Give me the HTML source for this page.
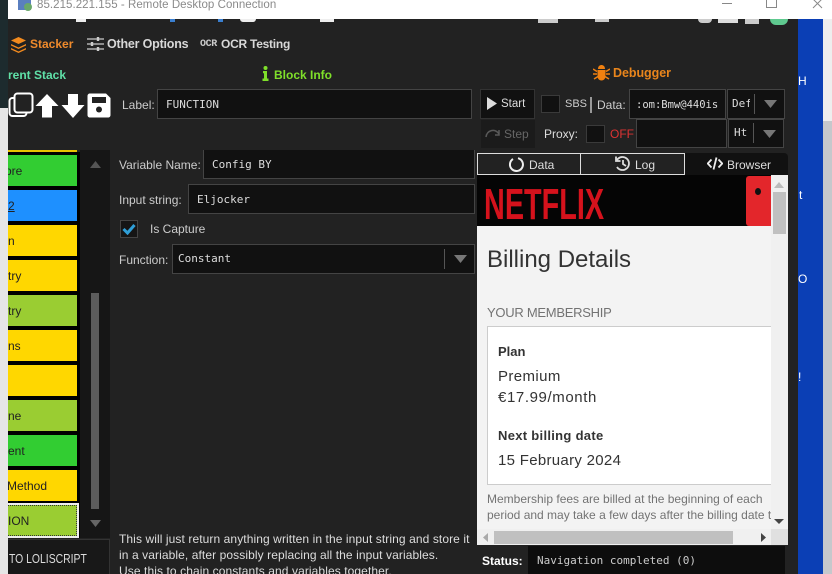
<!DOCTYPE html>
<html>
<head>
<meta charset="utf-8">
<style>
html,body{margin:0;padding:0;background:#222}
#r{position:relative;width:832px;height:574px;overflow:hidden;background:#222;font-family:"Liberation Sans",sans-serif;font-size:12px;color:#ddd}
#r div,#r svg{position:absolute}
.t{white-space:nowrap;line-height:16px}
.l{white-space:nowrap;line-height:16px;font-size:12px;color:#ccc}
.m{font-family:"DejaVu Sans Mono","Liberation Mono",monospace;font-size:11px;color:#ddd;white-space:nowrap;line-height:16px}
.box{background:#111;border:1px solid #444;box-sizing:border-box}
.blk{left:8px;width:69px;height:31px;color:#222;font-size:12px;line-height:33px;white-space:nowrap;overflow:hidden}
.b{font-weight:bold}
.w{background:#eee;top:19px;height:3px}
</style>
</head>
<body>
<div id="r">
<!-- desktop strips -->
<div style="left:0;top:0;width:8px;height:108px;background:#1d2b2e"></div>
<div style="left:0;top:108px;width:8px;height:466px;background:#e6e6e6"></div>
<div style="left:798px;top:0;width:25px;height:574px;background:#0b3fb5"></div>
<div style="left:823px;top:19px;width:9px;height:555px;background:#c6c8cc"></div>
<div style="left:823px;top:19px;width:9px;height:102px;background:#eee"></div>
<div class="t" style="left:798px;top:73px;color:#fff;font-size:12px">H</div>
<div class="t" style="left:799px;top:187px;color:#fff;font-size:12px">t</div>
<div class="t" style="left:798px;top:271px;color:#fff;font-size:12px">O</div>
<div class="t" style="left:798px;top:369px;color:#fff;font-size:12px">!</div>

<!-- title bar -->
<div style="left:8px;top:0;width:824px;height:19px;background:#fff"></div>
<div style="left:18px;top:0;width:13px;height:10px;background:#5a7fc0"></div>
<div style="left:24px;top:3px;width:8px;height:8px;border-radius:50%;background:#6aa86a"></div>
<div class="t" style="left:37px;top:-3px;color:#8a8a8a;font-size:11.5px;letter-spacing:.05px">85.215.221.155 - Remote Desktop Connection</div>
<div style="left:722px;top:3px;width:10px;height:1px;background:#888"></div>
<div style="left:766px;top:-3px;width:9px;height:9px;border:1px solid #888"></div>
<svg style="left:812px;top:-2px" width="11" height="11"><path d="M1 1L10 10M10 1L1 10" stroke="#888" fill="none"/></svg>
<!-- clipped taskbar fragments -->
<div class="w" style="left:76px;width:10px"></div>
<div class="w" style="left:170px;width:5px;background:#3a7fd0"></div>
<div class="w" style="left:218px;width:5px;background:#3a7fd0"></div>
<div class="w" style="left:240px;width:16px;border-radius:0 0 8px 8px"></div>
<div class="w" style="left:320px;width:14px"></div>
<div class="w" style="left:538px;width:20px;height:4px;background:#ccc"></div>
<div class="w" style="left:595px;width:14px;height:3px;background:#ccc"></div>
<div class="w" style="left:698px;width:14px;height:4px;background:#ccc;border-radius:0 0 7px 7px"></div>
<div class="w" style="left:718px;width:20px;height:4px;background:#ddd"></div>
<div class="w" style="left:745px;width:14px;height:5px;background:#ccc"></div>
<div style="left:770px;top:19px;width:18px;height:6px;border-radius:0 0 9px 9px;background:#5fc98f"></div>

<!-- tabs -->
<svg style="left:10px;top:37px" width="17" height="16" viewBox="0 0 17 16"><path d="M8.5 0L16 3.5L8.5 7L1 3.5Z" fill="#f28a1e"/><path d="M1 7L8.5 10.5L16 7V8.5L8.5 12L1 8.5Z" fill="#f28a1e"/><path d="M1 11L8.5 14.5L16 11V12.5L8.5 16L1 12.5Z" fill="#f28a1e"/></svg>
<div class="t b" style="left:30px;top:36px;color:#ef8a2c;font-size:12px">Stacker</div>
<svg style="left:87px;top:36px" width="17" height="16" viewBox="0 0 17 16"><path d="M0 3H17M0 8H17M0 13H17" stroke="#ccc" stroke-width="1.3"/><path d="M11 1V5M5 6V10M11 11V15" stroke="#ccc" stroke-width="2.4"/></svg>
<div class="t b" style="left:107px;top:36px;color:#d8d8d8;font-size:12.5px;letter-spacing:-.2px">Other Options</div>
<div class="t b" style="left:200px;top:37px;color:#ccc;font-size:10px;font-family:'Liberation Mono',monospace;letter-spacing:-.4px">OCR</div>
<div class="t b" style="left:221px;top:36px;color:#d8d8d8;font-size:12px;letter-spacing:-.25px">OCR Testing</div>

<!-- headers -->
<div class="t b" style="left:8px;top:67px;color:#5fe0a8;font-size:12px">rent Stack</div>
<svg style="left:262px;top:66px" width="7" height="15" viewBox="0 0 7 15"><circle cx="3.5" cy="2" r="2" fill="#7fe02a"/><path d="M1 5H5V12.5H6.5V15H.5V12.5H2V7.2H1Z" fill="#7fe02a"/></svg>
<div class="t b" style="left:274px;top:67px;color:#7fe02a;font-size:12px">Block Info</div>
<svg style="left:593px;top:64px" width="17" height="17" viewBox="0 0 17 17"><path d="M5 5C5 2 7 1 8.500 1S12 2 12 5ZM4.500 6H12.500V12C12.500 15 10.500 16.500 8.500 16.500S4.500 15 4.500 12Z" fill="#f08010"/><path d="M0 5L4 7.500M17 5L13 7.500M0 10H4M17 10H13M1 15L5 12.500M16 15L12 12.500" stroke="#f08010" stroke-width="1.500"/></svg>
<div class="t b" style="left:613px;top:65px;color:#e9851c;font-size:12.5px;letter-spacing:-.05px">Debugger</div>

<!-- toolbar icons -->
<svg style="left:8px;top:92px" width="26" height="26" viewBox="0 0 26 26"><rect x="1.500" y="6" width="17" height="18" rx="3" fill="none" stroke="#fff" stroke-width="2"/><rect x="6.500" y="1.500" width="18" height="19" rx="3" fill="#222" stroke="#fff" stroke-width="2"/></svg>
<svg style="left:35px;top:93px" width="24" height="25" viewBox="0 0 24 25"><path d="M12 1L23.500 13H17V24.500H7V13H.5Z" fill="#fff"/></svg>
<svg style="left:61px;top:94px" width="24" height="24" viewBox="0 0 24 24"><path d="M7 0H17V11H23.500L12 24L.5 11H7Z" fill="#fff"/></svg>
<svg style="left:87px;top:93px" width="24" height="25" viewBox="0 0 24 25"><path d="M3 .5H19L23.500 5V22C23.500 23.500 22.500 24.500 21 24.500H3C1.500 24.500 .5 23.500 .5 22V3C.5 1.500 1.500 .5 3 .5Z" fill="#fff"/><rect x="5" y="4" width="14" height="6" fill="#222"/><circle cx="12" cy="16.500" r="3" fill="#222"/></svg>

<div class="l" style="left:122px;top:97px">Label:</div>
<div class="box" style="left:157px;top:89px;width:315px;height:30px"></div>
<div class="m" style="left:166px;top:97px">FUNCTION</div>

<!-- debugger controls -->
<div class="box" style="left:480px;top:89px;width:55px;height:30px;border-color:#333"></div>
<svg style="left:487px;top:97px" width="11" height="13"><path d="M0 0L10 6.500L0 13Z" fill="#ddd"/></svg>
<div class="l" style="left:501px;top:96px;color:#ddd;font-size:11.5px">Start</div>
<div style="left:481px;top:120px;width:54px;height:28px;background:#1b1b1b"></div>
<svg style="left:485px;top:128px" width="16" height="10"><path d="M1 9C2 2 10 0 14 6M14 2V7H10" fill="none" stroke="#5a5a5a" stroke-width="1.500"/></svg>
<div class="l" style="left:504px;top:126px;color:#666">Step</div>
<div class="box" style="left:541px;top:95px;width:19px;height:18px;border-color:#3a3a3a"></div>
<div class="l" style="left:565px;top:96px;font-size:11px">SBS</div>
<div style="left:590px;top:97px;width:2px;height:16px;background:#999"></div>
<div class="l" style="left:597px;top:97px">Data:</div>
<div class="box" style="left:629px;top:89px;width:97px;height:30px;overflow:hidden"></div>
<div class="m" style="left:636px;top:97px;font-size:10.5px">:om:Bmw@440is</div>
<div class="box" style="left:727px;top:89px;width:58px;height:30px"></div>
<div class="m" style="left:732px;top:96px;width:18px;overflow:hidden">Def</div>
<div style="left:754px;top:94px;width:1px;height:20px;background:#555"></div>
<svg style="left:764px;top:100px" width="13" height="8"><path d="M0 0H13L6.500 8Z" fill="#777"/></svg>

<div class="l" style="left:544px;top:126px;color:#ddd">Proxy:</div>
<div class="box" style="left:586px;top:125px;width:19px;height:18px;border-color:#3a3a3a"></div>
<div class="l" style="left:610px;top:126px;color:#d33">OFF</div>
<div class="box" style="left:636px;top:119px;width:91px;height:29px"></div>
<div class="box" style="left:728px;top:119px;width:56px;height:29px"></div>
<div class="m" style="left:734px;top:125px">Ht</div>
<div style="left:753px;top:123px;width:1px;height:20px;background:#555"></div>
<svg style="left:763px;top:130px" width="13" height="8"><path d="M0 0H13L6.500 8Z" fill="#777"/></svg>

<!-- block list -->
<div style="left:8px;top:150px;width:69px;height:2px;background:#e8c200"></div>
<div style="left:8px;top:152px;width:72px;height:386px;background:#000"></div>
<div class="blk" style="top:155px;background:#32cd32"><span style="margin-left:-3px">ore</span></div>
<div class="blk" style="top:190px;background:#1e90ff"><span style="text-decoration:underline">2</span></div>
<div class="blk" style="top:225px;background:#ffd700">n</div>
<div class="blk" style="top:260px;background:#ffd700">try</div>
<div class="blk" style="top:295px;background:#9acd32">try</div>
<div class="blk" style="top:330px;background:#ffd700">ns</div>
<div class="blk" style="top:365px;background:#ffd700"></div>
<div class="blk" style="top:400px;background:#9acd32">ne</div>
<div class="blk" style="top:435px;background:#32cd32">ent</div>
<div class="blk" style="top:470px;background:#ffd700"><span style="margin-left:-1px">Method</span></div>
<div style="left:8px;top:503px;width:71px;height:35px;box-sizing:border-box;border:2px solid #eee;border-left:0;background:#9acd32"></div>
<div style="left:8px;top:505px;width:69px;height:31px;box-sizing:border-box;border:1px dotted #333;border-left:0"></div>
<div class="blk" style="top:505px;background:none">ION</div>

<!-- scrollbar -->
<div style="left:80px;top:150px;width:30px;height:388px;background:#161616"></div>
<svg style="left:90px;top:161px" width="11" height="7"><path d="M0 7H11L5.500 0Z" fill="#555"/></svg>
<div style="left:91px;top:293px;width:8px;height:216px;background:#5c5c5c"></div>
<svg style="left:90px;top:520px" width="11" height="7"><path d="M0 0H11L5.500 7Z" fill="#666"/></svg>
<div style="left:8px;top:539px;width:102px;height:35px;background:#181818;border-top:1px solid #333;border-right:1px solid #333;box-sizing:border-box"></div>
<div class="t" style="left:9px;top:551px;font-size:13px;color:#ddd;transform-origin:0 0;transform:scaleX(.8)">TO LOLISCRIPT</div>

<!-- block form -->
<div class="l" style="left:119px;top:157px">Variable Name:</div>
<div class="box" style="left:203px;top:150px;width:272px;height:29px;border-top:0"></div>
<div class="m" style="left:212px;top:157px">Config BY</div>
<div class="l" style="left:119px;top:192px">Input string:</div>
<div class="box" style="left:188px;top:184px;width:287px;height:30px"></div>
<div class="m" style="left:197px;top:192px">Eljocker</div>
<div style="left:120px;top:220px;width:18px;height:18px;background:#151515;border:1px solid #444;box-sizing:border-box"></div>
<svg style="left:122px;top:223px" width="14" height="12"><path d="M1.500 6L5.500 10L12.500 2" fill="none" stroke="#2f9fd8" stroke-width="3"/></svg>
<div class="l" style="left:150px;top:221px">Is Capture</div>
<div class="l" style="left:119px;top:252px">Function:</div>
<div class="box" style="left:172px;top:244px;width:303px;height:30px"></div>
<div class="m" style="left:178px;top:251px">Constant</div>
<div style="left:444px;top:249px;width:1px;height:20px;background:#555"></div>
<svg style="left:454px;top:255px" width="13" height="8"><path d="M0 0H13L6.500 8Z" fill="#777"/></svg>

<div class="l" style="left:119px;top:531px;color:#ddd;letter-spacing:.09px">This will just return anything written in the input string and store it</div>
<div class="l" style="left:119px;top:547px;color:#ddd;letter-spacing:.09px">in a variable, after possibly replacing all the input variables.</div>
<div class="l" style="left:119px;top:563px;color:#ddd;letter-spacing:.09px">Use this to chain constants and variables together.</div>

<!-- debugger tabs -->
<div style="left:477px;top:153px;width:311px;height:22px;background:#111;border-radius:0 4px 0 0"></div>
<div style="left:477px;top:153px;width:104px;height:22px;box-sizing:border-box;border:1px solid #ddd;background:#222"></div>
<div style="left:581px;top:153px;width:104px;height:22px;box-sizing:border-box;border:1px solid #ddd;border-left:0;background:#222"></div>
<svg style="left:508px;top:156px" width="17" height="17"><path d="M5 3A6.500 6.500 0 1 0 10 2.200" fill="none" stroke="#eee" stroke-width="2"/></svg>
<div class="l" style="left:529px;top:157px;color:#ddd">Data</div>
<svg style="left:614px;top:155px" width="17" height="17"><path d="M3 5A6.500 6.500 0 1 1 3 12M2 1.500V6H6.500M9 5V9L12 11" fill="none" stroke="#ddd" stroke-width="1.800"/></svg>
<div class="l" style="left:635px;top:157px;color:#ddd">Log</div>
<svg style="left:707px;top:157px" width="16" height="13"><path d="M4.500 2.500L.8 6.500L4.500 10.500M11.500 2.500L15.200 6.500L11.500 10.500M9.500 .5L6.500 12.500" fill="none" stroke="#eee" stroke-width="1.800"/></svg>
<div class="l" style="left:727px;top:157px;color:#ddd">Browser</div>

<!-- browser -->
<div style="left:477px;top:175px;width:311px;height:370px;background:#f3f3f3;overflow:hidden"></div>
<div style="left:477px;top:175px;width:294px;height:51px;background:#050505"></div>
<div style="left:746px;top:176px;width:25px;height:50px;background:#e3262b;border-radius:3px 0 0 3px"></div>
<div style="left:755px;top:188px;width:6px;height:7px;border-radius:50%;background:#111"></div>
<div class="t b" style="left:484px;top:183px;color:#d5121c;font-size:44px;line-height:44px;transform-origin:0 0;transform:scaleX(.655)">NETFLIX</div>
<div class="t" style="left:487px;top:245px;color:#333;line-height:30px;font-size:24px">Billing Details</div>
<div class="t" style="left:487px;top:305px;color:#737373;font-size:13px;letter-spacing:-.27px">YOUR MEMBERSHIP</div>
<div style="left:487px;top:326px;width:284px;height:159px;background:#fff;border:1px solid #ccc;border-right:0;box-sizing:border-box"></div>
<div class="t b" style="left:498px;top:344px;color:#333;font-size:13px">Plan</div>
<div class="t" style="left:498px;top:369px;color:#333;font-size:15px;letter-spacing:.4px">Premium</div>
<div class="t" style="left:498px;top:390px;color:#333;font-size:15px;letter-spacing:.6px">€17.99/month</div>
<div class="t b" style="left:498px;top:428px;color:#333;font-size:13px;letter-spacing:.3px">Next billing date</div>
<div class="t" style="left:498px;top:453px;color:#333;font-size:15px;letter-spacing:.3px">15 February 2024</div>
<div class="t" style="left:487px;top:491px;color:#737373;font-size:12px">Membership fees are billed at the beginning of each</div>
<div class="t" style="left:487px;top:507px;width:284px;overflow:hidden;color:#737373;font-size:12px">period and may take a few days after the billing date to</div>

<!-- browser scrollbars -->
<div style="left:771px;top:175px;width:17px;height:354px;background:#f0f0f0"></div>
<svg style="left:774px;top:182px" width="10" height="6"><path d="M0 6H10L5 0Z" fill="#bbb"/></svg>
<div style="left:773px;top:192px;width:13px;height:42px;background:#c0c0c0"></div>
<svg style="left:774px;top:519px" width="10" height="5"><path d="M0 0H10L5 5Z" fill="#444"/></svg>
<div style="left:477px;top:529px;width:294px;height:16px;background:#f0f0f0"></div>
<svg style="left:483px;top:533px" width="5" height="9"><path d="M5 0V9L0 4.500Z" fill="#aaa"/></svg>
<div style="left:494px;top:531px;width:239px;height:13px;background:#c0c0c0"></div>
<svg style="left:761px;top:533px" width="5" height="9"><path d="M0 0V9L5 4.500Z" fill="#444"/></svg>
<div style="left:771px;top:529px;width:17px;height:16px;background:#e0e0e0"></div>

<!-- status -->
<div style="left:477px;top:545px;width:321px;height:29px;background:#222"></div>
<div class="t b" style="left:482px;top:553px;color:#fff;font-size:12px">Status:</div>
<div style="left:528px;top:546px;width:257px;height:28px;background:#0d0d0d"></div>
<div class="m" style="left:537px;top:553px;color:#ccc">Navigation completed (0)</div>
</div>
</body>
</html>
